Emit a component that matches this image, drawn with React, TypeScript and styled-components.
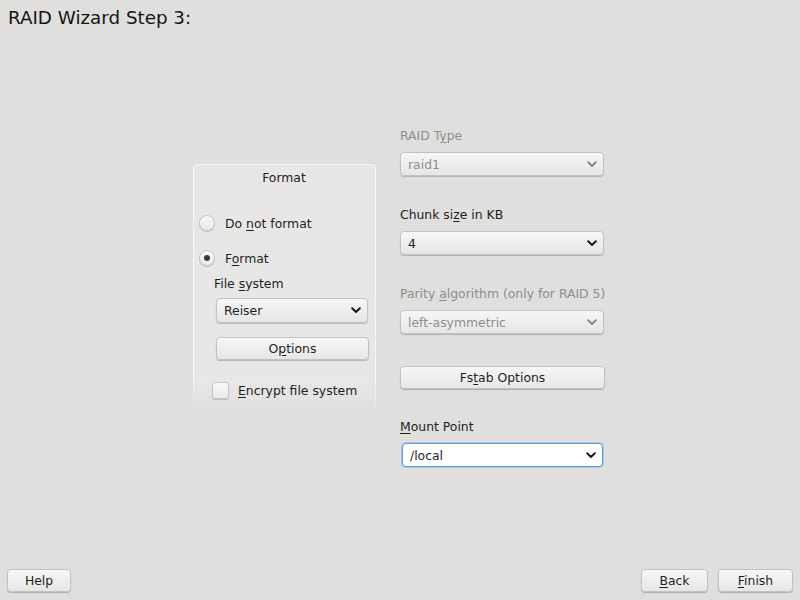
import styled, { createGlobalStyle } from 'styled-components';

const GlobalStyle = createGlobalStyle`
  html, body {
    margin: 0;
    padding: 0;
    background: #e0dfdd;
  }
  body {
    font-family: "DejaVu Sans", "Liberation Sans", sans-serif;
    font-size: 12.4px;
    color: #1e1e1e;
  }
`;

const Page = styled.div`
  width: 800px;
  height: 600px;
  display: flex;
  flex-direction: column;
  background: #e0dfdd;
  overflow: hidden;
`;

const Title = styled.h1`
  margin: 0;
  padding: 7px 0 0 8px;
  height: 29px;
  box-sizing: border-box;
  font-size: 18.3px;
  font-weight: normal;
  color: #141414;
`;

const Main = styled.div`
  flex: 1;
  display: flex;
  justify-content: center;
  align-items: flex-start;
  padding-top: 98px;
  padding-right: 2px;
  gap: 24px;
`;

const Frame = styled.div`
  position: relative;
  margin-top: 37px;
  width: 183px;
  height: 252px;
  box-sizing: border-box;
  padding: 5px 7px 0 6px;
  display: flex;
  flex-direction: column;
  &::before {
    content: '';
    position: absolute;
    inset: 0;
    border: 1px solid #f6f6f5;
    border-bottom: none;
    border-radius: 4px 4px 0 0;
    background: #e8e7e6;
    box-shadow: -1px -1px 0 #cfcdcb, 1px 0 0 #cfcdcb;
    -webkit-mask-image: linear-gradient(to bottom, #000 86%, transparent 100%);
    mask-image: linear-gradient(to bottom, #000 86%, transparent 100%);
    z-index: 0;
  }
  & > * {
    position: relative;
    z-index: 1;
  }
`;

const FrameTitle = styled.div`
  text-align: center;
  height: 17px;
  line-height: 17px;
  margin-bottom: 28px;
`;

const RadioRow = styled.label<{ $mb?: number }>`
  display: flex;
  align-items: center;
  height: 18px;
  gap: 10px;
  margin-bottom: ${p => p.$mb ?? 0}px;
`;

const RadioDot = styled.span<{ $on?: boolean }>`
  width: 16px;
  height: 16px;
  border-radius: 50%;
  box-sizing: border-box;
  background: linear-gradient(#f8f8f8, #e9e9e9);
  border: 1px solid #c8c6c4;
  box-shadow: 0 1px 1px rgba(0, 0, 0, 0.18);
  display: flex;
  align-items: center;
  justify-content: center;
  &::after {
    content: '';
    display: ${p => (p.$on ? 'block' : 'none')};
    width: 6px;
    height: 6px;
    border-radius: 50%;
    background: #3a3a3a;
  }
`;

const Indent = styled.div`
  padding-left: 15px;
  display: flex;
  flex-direction: column;
`;

const FieldLabel = styled.div<{ $disabled?: boolean; $mb?: number }>`
  height: 17px;
  line-height: 17px;
  white-space: nowrap;
  color: ${p => (p.$disabled ? '#8e8d8c' : '#1e1e1e')};
  margin-bottom: ${p => p.$mb ?? 8}px;
`;

const U = styled.span`
  text-decoration: underline;
  text-underline-offset: 2px;
`;

const Combo = styled.div<{ $disabled?: boolean; $focus?: boolean; $w?: number; $h?: number }>`
  width: ${p => p.$w ?? 204}px;
  height: ${p => p.$h ?? 24}px;
  box-sizing: border-box;
  border-radius: 4px;
  border: 1px solid ${p => (p.$focus ? '#5f9ad8' : '#c4c2c0')};
  background: ${p => (p.$focus ? '#ffffff' : 'linear-gradient(#f6f6f6, #e6e6e6)')};
  box-shadow: ${p => (p.$focus ? '0 0 0 1px #a8c8ec' : '0 1px 1px rgba(0,0,0,0.2)')};
  display: flex;
  align-items: center;
  justify-content: space-between;
  padding: 0 6px 0 7px;
  color: ${p => (p.$disabled ? '#8e8d8c' : '#1e1e1e')};
`;

const Button = styled.div<{ $w?: number }>`
  width: ${p => (p.$w ? `${p.$w}px` : 'auto')};
  height: 23px;
  box-sizing: border-box;
  border-radius: 4px;
  border: 1px solid #c4c2c0;
  background: linear-gradient(#f7f7f7, #e6e6e6);
  box-shadow: 0 1px 1px rgba(0, 0, 0, 0.22);
  display: flex;
  align-items: center;
  justify-content: center;
  color: #1e1e1e;
`;

const CheckRow = styled.label`
  display: flex;
  align-items: center;
  gap: 9px;
  margin-top: 22px;
  margin-left: -2px;
`;

const CheckBox = styled.span`
  width: 17px;
  height: 17px;
  box-sizing: border-box;
  border-radius: 3px;
  border: 1px solid #c8c6c4;
  background: linear-gradient(#f8f8f8, #e9e9e9);
  box-shadow: 0 1px 1px rgba(0, 0, 0, 0.18);
`;

const Column = styled.div`
  width: 205px;
  display: flex;
  flex-direction: column;
`;

const Spacer = styled.div<{ $h: number }>`
  height: ${p => p.$h}px;
  flex: none;
`;

const Footer = styled.div`
  height: 31px;
  display: flex;
  align-items: flex-start;
  padding: 0 7px;
  gap: 10px;
`;

const Grow = styled.div`
  flex: 1;
`;

function Chevron({ disabled }: { disabled?: boolean }) {
  return (
    <svg width="10" height="7" viewBox="0 0 10 7">
      <path
        d="M1.2 1.3 L5 5 L8.8 1.3"
        fill="none"
        stroke={disabled ? '#8a8a8a' : '#1a1a1a'}
        strokeWidth="2"
        strokeLinecap="round"
        strokeLinejoin="round"
      />
    </svg>
  );
}

export default function App() {
  return (
    <Page>
      <GlobalStyle />
      <Title>RAID Wizard Step 3:</Title>
      <Main>
        <Frame>
          <FrameTitle>Format</FrameTitle>
          <RadioRow $mb={17}>
            <RadioDot />
            <span>Do <U>n</U>ot format</span>
          </RadioRow>
          <RadioRow $mb={8}>
            <RadioDot $on />
            <span>F<U>o</U>rmat</span>
          </RadioRow>
          <Indent>
            <FieldLabel $mb={6}>File <U>s</U>ystem</FieldLabel>
            <Combo $w={152} $h={25} style={{ marginLeft: 2 }}>
              <span>Reiser</span>
              <Chevron />
            </Combo>
            <Spacer $h={14} />
            <Button $w={153} style={{ marginLeft: 2 }}>
              <span>O<U>p</U>tions</span>
            </Button>
            <CheckRow>
              <CheckBox />
              <span><U>E</U>ncrypt file system</span>
            </CheckRow>
          </Indent>
        </Frame>
        <Column>
          <FieldLabel $disabled>RAID T<U>y</U>pe</FieldLabel>
          <Combo $disabled>
            <span>raid1</span>
            <Chevron disabled />
          </Combo>
          <Spacer $h={30} />
          <FieldLabel>Chunk si<U>z</U>e in KB</FieldLabel>
          <Combo>
            <span>4</span>
            <Chevron />
          </Combo>
          <Spacer $h={30} />
          <FieldLabel $disabled>Parity <U>a</U>lgorithm (only for RAID 5)</FieldLabel>
          <Combo $disabled>
            <span>left-asymmetric</span>
            <Chevron disabled />
          </Combo>
          <Spacer $h={32} />
          <Button $w={205}>
            <span>Fs<U>t</U>ab Options</span>
          </Button>
          <Spacer $h={29} />
          <FieldLabel><U>M</U>ount Point</FieldLabel>
          <Combo $focus $w={201} style={{ marginLeft: 2 }}>
            <span>/local</span>
            <Chevron />
          </Combo>
        </Column>
      </Main>
      <Footer>
        <Button $w={64}>Help</Button>
        <Grow />
        <Button $w={67}>
          <span><U>B</U>ack</span>
        </Button>
        <Button $w={75}>
          <span><U>F</U>inish</span>
        </Button>
      </Footer>
    </Page>
  );
}
